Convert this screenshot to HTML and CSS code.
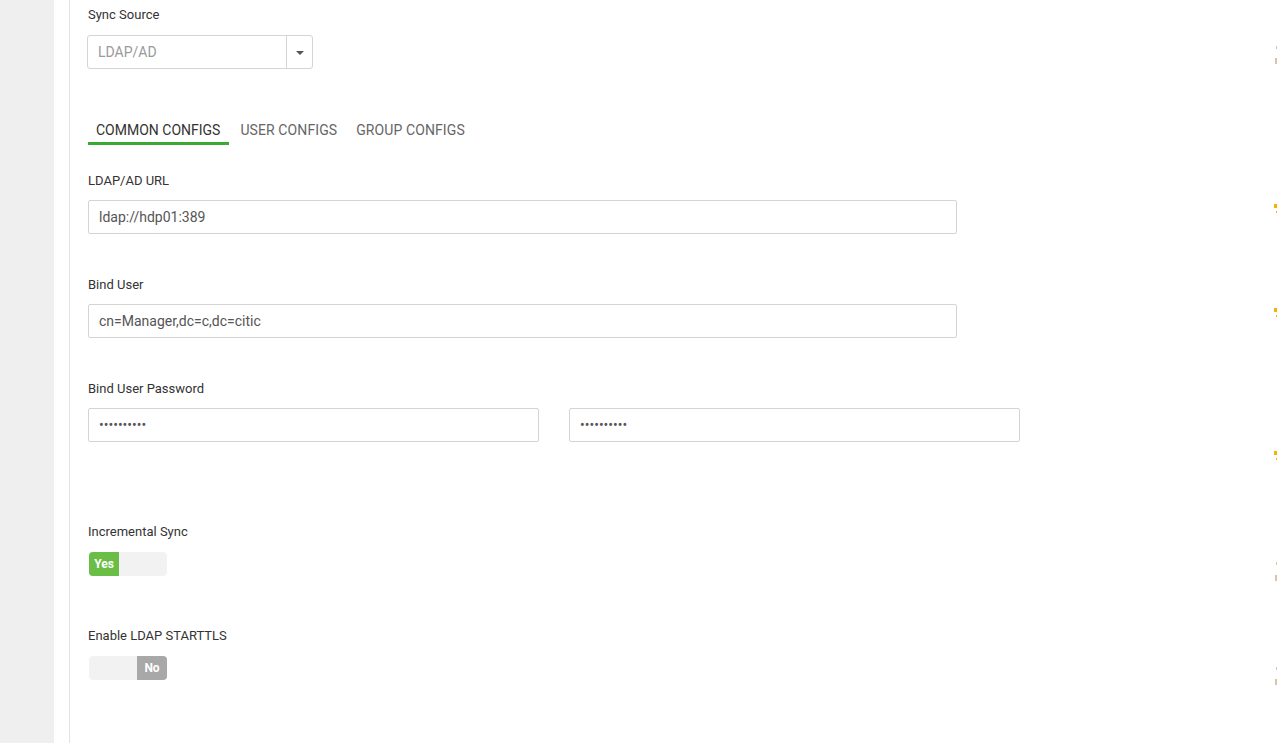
FILE: index.html
```html
<!DOCTYPE html>
<html>
<head>
<meta charset="utf-8">
<link rel="stylesheet" href="styles.css">
</head>
<body>
<div class="page">
  <aside class="sidebar"></aside>
  <div class="gutter"></div>
  <main class="content">
    <div class="field first">
      <div class="label">Sync Source</div>
      <div class="select">
        <div class="select-value">LDAP/AD</div>
        <div class="select-btn"><span class="caret"></span></div>
      </div>
    </div>

    <nav class="tabs">
      <div class="tab active">COMMON CONFIGS</div>
      <div class="tab">USER CONFIGS</div>
      <div class="tab">GROUP CONFIGS</div>
    </nav>

    <div class="field">
      <div class="label">LDAP/AD URL</div>
      <div class="input wide">ldap://hdp01:389</div>
    </div>

    <div class="field">
      <div class="label">Bind User</div>
      <div class="input wide">cn=Manager,dc=c,dc=citic</div>
    </div>

    <div class="field pw">
      <div class="label">Bind User Password</div>
      <div class="pw-row">
        <div class="input half dots">••••••••••</div>
        <div class="input half dots">••••••••••</div>
      </div>
    </div>

    <div class="field toggle-field">
      <div class="label">Incremental Sync</div>
      <div class="toggle">
        <span class="knob yes">Yes</span>
        <span class="rest"></span>
      </div>
    </div>

    <div class="field toggle-field">
      <div class="label">Enable LDAP STARTTLS</div>
      <div class="toggle">
        <span class="rest"></span>
        <span class="knob no">No</span>
      </div>
    </div>
  </main>
  <div class="edge">
    <span class="mark tan m1"></span>
    <span class="mark tan m2"></span>
    <span class="mark yel m3"></span>
    <span class="mark yel m4"></span>
    <span class="mark yel m5"></span>
    <span class="mark yel m6"></span>
    <span class="mark yel m7"></span>
    <span class="mark yel m8"></span>
    <span class="mark tan m9"></span>
    <span class="mark tan m10"></span>
    <span class="mark tan m11"></span>
    <span class="mark tan m12"></span>
  </div>
</div>
</body>
</html>
```

FILE: styles.css
```css
html, body {
  margin: 0;
  padding: 0;
  background: #fff;
  font-family: Roboto, "Liberation Sans", Arial, sans-serif;
  color: #333;
}

.page {
  display: flex;
  width: 1277px;
  height: 743px;
  overflow: hidden;
}

.sidebar {
  width: 54px;
  flex: none;
  background: #efefef;
}

.gutter {
  width: 15px;
  flex: none;
  border-right: 1px solid #e3e3e3;
}

.content {
  flex: 1;
  padding: 6px 0 0 18px;
}

.label {
  font-size: 13px;
  line-height: 18px;
  color: #333;
  margin-bottom: 11px;
}

.field:not(.first) .label {
  padding-top: 1px;
  margin-bottom: 10px;
}

.field {
  margin-bottom: 41px;
}

.field.first {
  margin-bottom: 44px;
}

.select {
  display: flex;
  width: 224px;
  height: 32px;
  margin-left: -1px;
  border: 1px solid #d4d4d4;
  border-radius: 3px;
  box-sizing: content-box;
}

.select-value {
  flex: 1;
  padding-left: 10px;
  font-size: 14px;
  line-height: 32px;
  color: #9a9a9a;
  border-right: 1px solid #d4d4d4;
}

.select-btn {
  width: 25px;
  display: flex;
  align-items: center;
  justify-content: center;
}

.caret {
  width: 0;
  height: 0;
  border-left: 4px solid transparent;
  border-right: 4px solid transparent;
  border-top: 4px solid #555;
  margin-top: 2px;
}

.tabs {
  display: flex;
  gap: 3px;
  margin-bottom: 26px;
}

.tab {
  padding: 7px 8px 2px;
  font-size: 14px;
  line-height: 20px;
  letter-spacing: 0.1px;
  color: #666;
  border-bottom: 3px solid transparent;
}

.tab.active {
  color: #333;
  padding-right: 9px;
  letter-spacing: 0;
  border-bottom-color: #3aaa35;
}

.input {
  height: 32px;
  border: 1px solid #d4d4d4;
  border-radius: 2px;
  padding-left: 10px;
  font-size: 14px;
  line-height: 32px;
  color: #555;
  box-sizing: content-box;
}

.input.wide {
  width: 857px;
}

.pw-row {
  display: flex;
  gap: 30px;
}

.input.half {
  width: 439px;
}

.input.dots {
  font-size: 14px;
  letter-spacing: 0;
  color: #555;
}

.field.pw {
  margin-bottom: 80px;
}

.field.toggle-field .label {
  margin-bottom: 11px;
}

.field.toggle-field {
  margin-bottom: 50px;
}

.toggle {
  display: flex;
  width: 78px;
  height: 24px;
  margin-left: 1px;
  background: #f2f2f2;
  border-radius: 4px;
  overflow: hidden;
}

.toggle .rest {
  flex: 1;
}

.knob {
  width: 30px;
  font-size: 12px;
  font-weight: bold;
  line-height: 24px;
  color: #fff;
  text-align: center;
}

.knob.yes {
  background: #6abd45;
}

.knob.no {
  background: #a8a8a8;
}

.edge {
  width: 3px;
  flex: none;
  position: relative;
  margin-left: -3px;
}

.mark {
  position: absolute;
  right: 0;
  width: 2px;
}

.mark.tan { background: #dcc3a6; }
.mark.yel { background: #f4b400; }

.m1 { top: 46px; height: 3px; width: 1px; }
.m2 { top: 58px; height: 6px; }
.m3 { top: 204px; height: 4px; width: 3px; }
.m4 { top: 211px; height: 2px; width: 1px; }
.m5 { top: 308px; height: 4px; width: 3px; }
.m6 { top: 315px; height: 2px; width: 1px; }
.m7 { top: 451px; height: 4px; width: 3px; }
.m8 { top: 458px; height: 2px; width: 1px; }
.m9 { top: 562px; height: 3px; width: 1px; }
.m10 { top: 575px; height: 6px; }
.m11 { top: 667px; height: 3px; width: 1px; }
.m12 { top: 679px; height: 6px; }
```
